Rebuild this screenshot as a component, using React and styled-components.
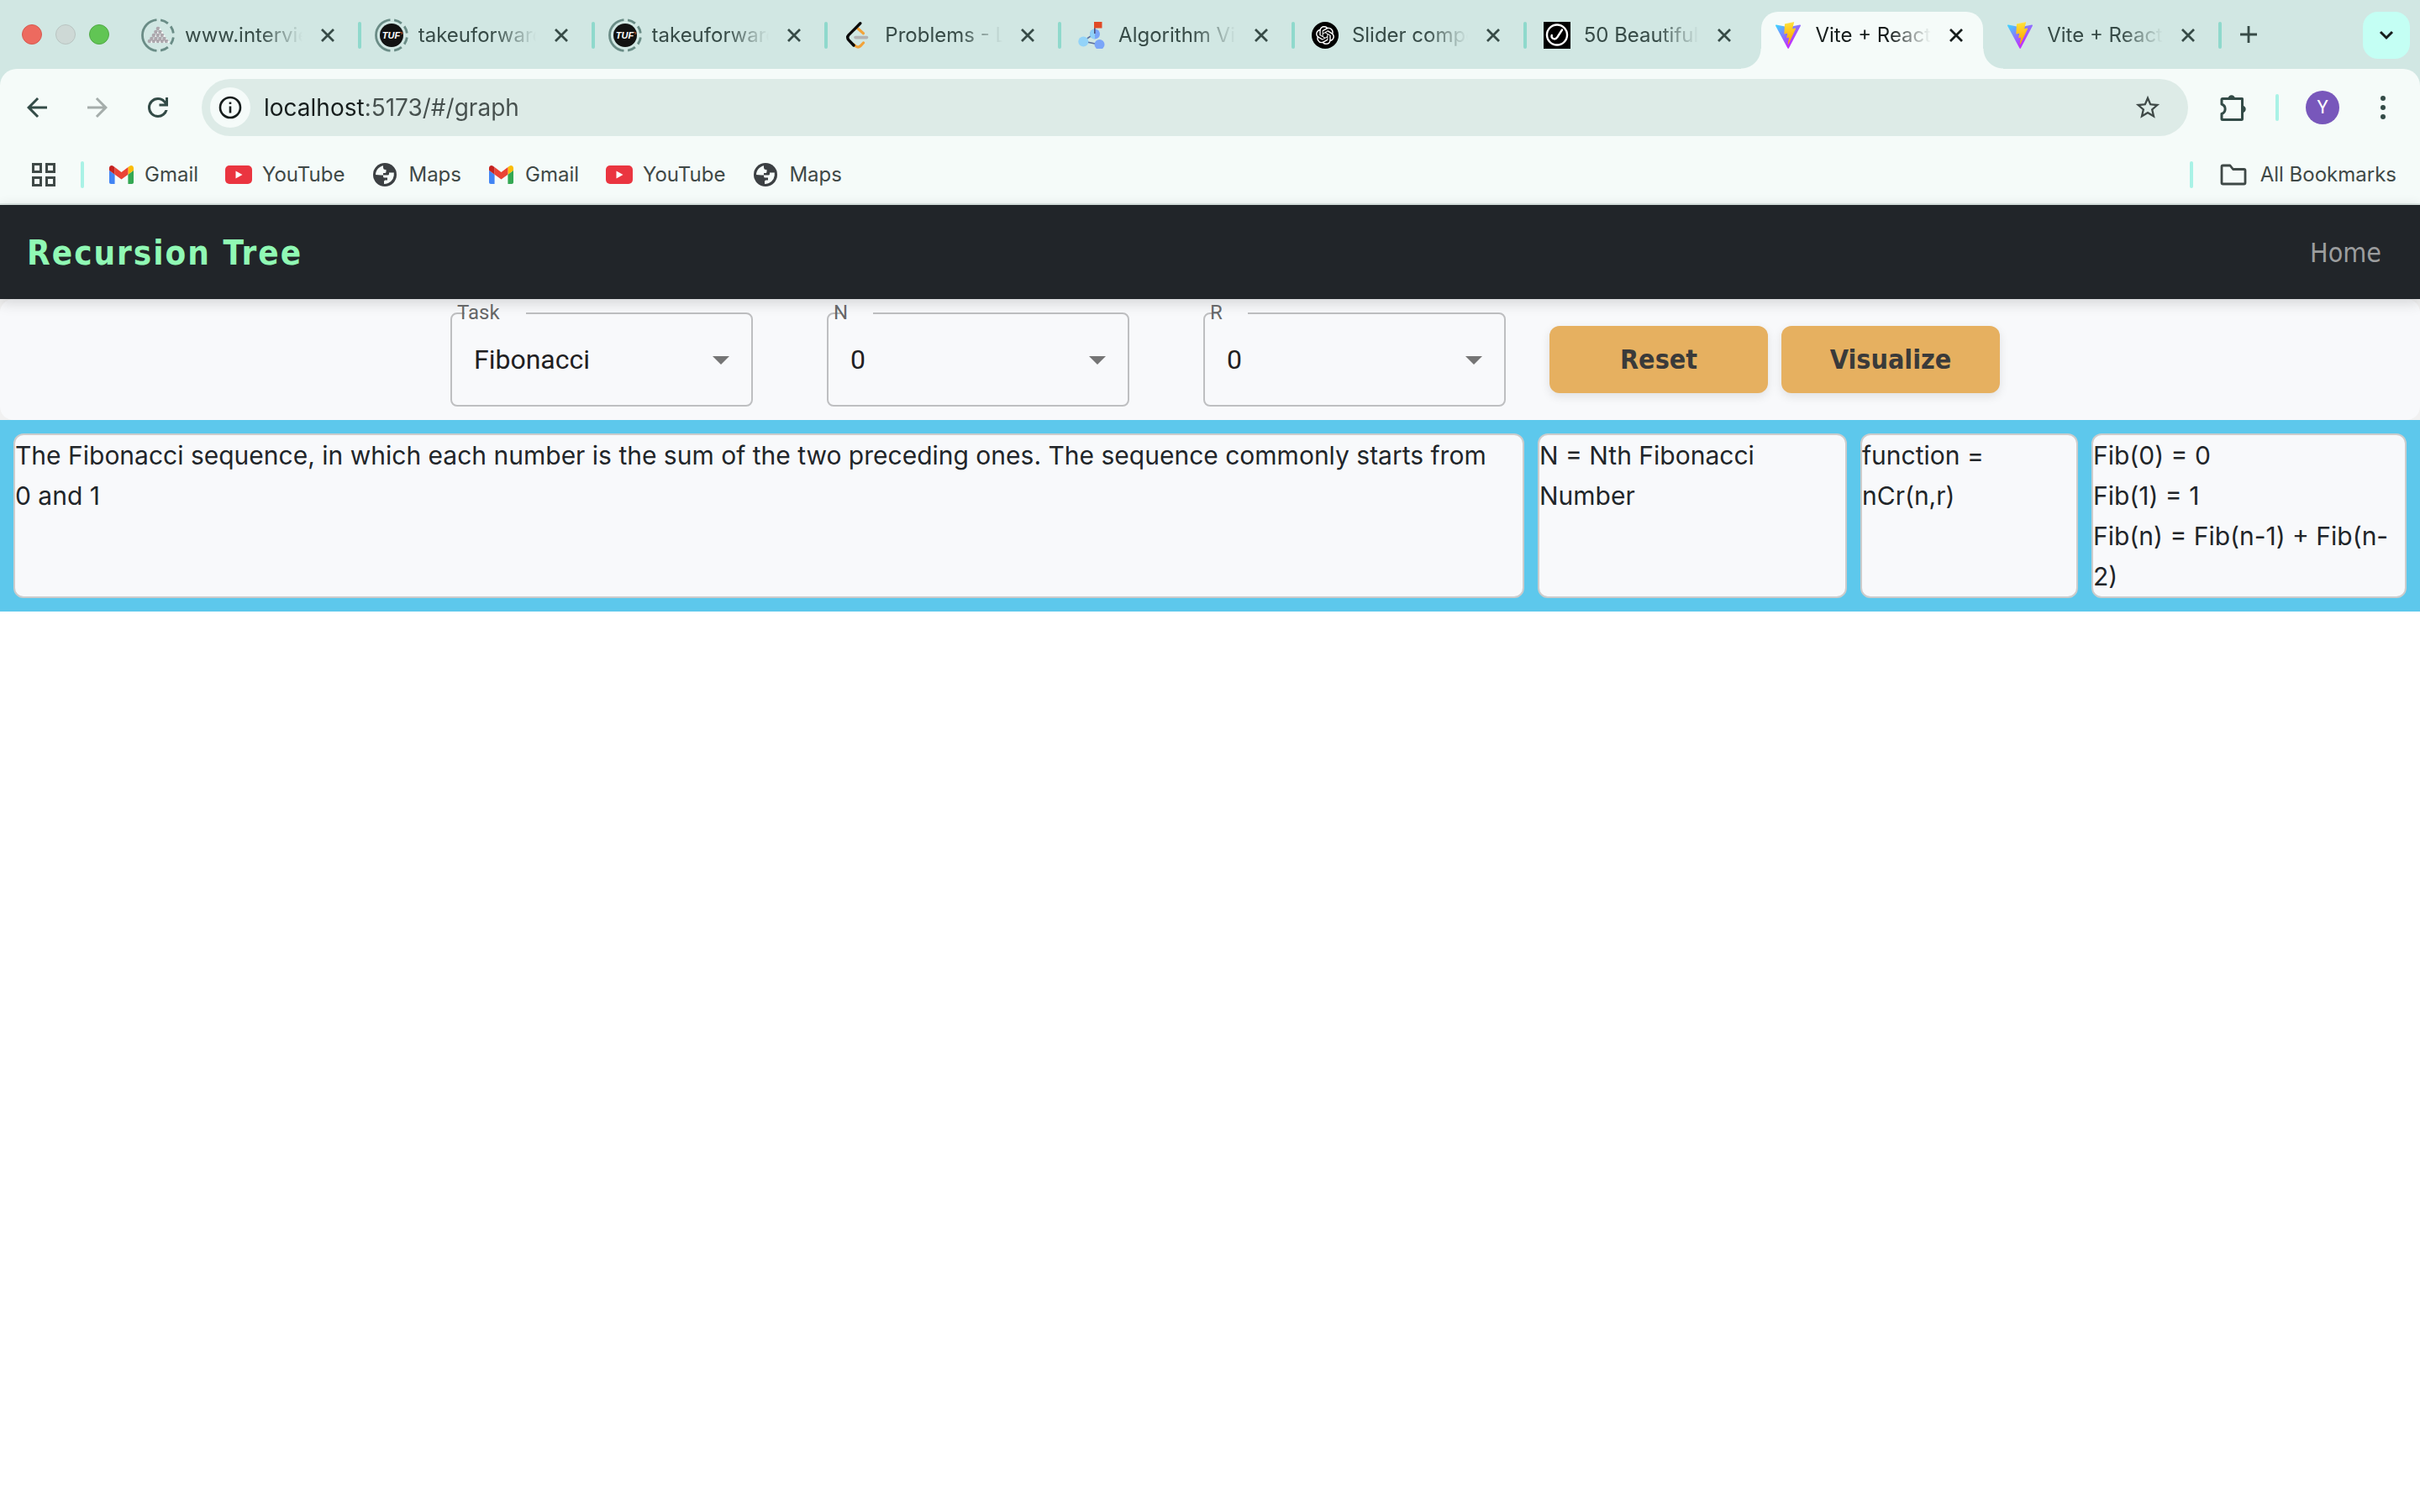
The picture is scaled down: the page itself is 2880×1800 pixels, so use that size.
import React, { useState } from "react";
import styled, { createGlobalStyle, css } from "styled-components";
import { SiOpenai } from "react-icons/si";

const ui = `Inter, "Liberation Sans", sans-serif`;
const heading = `"DejaVu Sans Condensed", "DejaVu Sans", sans-serif`;

const GlobalStyle = createGlobalStyle`
  * { box-sizing: border-box; }
  body { margin: 0; background: #ffffff; color: #212529; font-family: ${ui}; }
  button { border: 0; padding: 0; background: none; font: inherit; color: inherit; cursor: pointer; }
  svg { display: block; flex: none; }
`;

/* ---------- browser window ---------- */

const TabStrip = styled.header`
  display: flex;
  align-items: flex-start;
  height: 82px;
  padding: 14px 12px 0 26px;
  background: #d1e7e3;
`;

const WindowControls = styled.div`
  display: flex;
  align-items: center;
  gap: 16px;
  height: 54px;
  margin-right: 22px;
`;

const Light = styled.button`
  width: 24px;
  height: 24px;
  border-radius: 50%;
  background: ${(p) => p.$fill};
  border: 1px solid ${(p) => p.$edge};
`;

const Tabs = styled.nav`
  display: grid;
  grid-template-columns: repeat(5, 278fr) repeat(4, 276fr);
  flex: 1;
  min-width: 0;
`;

const activeShape = css`
  &::before {
    content: "";
    position: absolute;
    inset: 0 8px 0 4px;
    border-radius: 20px 20px 0 0;
    background: #f5fbf9;
  }
  &::after {
    content: "";
    position: absolute;
    left: -20px;
    right: -16px;
    bottom: 0;
    height: 24px;
    background:
      radial-gradient(circle at 0 0, transparent 23px, #f5fbf9 24px) left / 24px 24px no-repeat,
      radial-gradient(circle at 100% 0, transparent 23px, #f5fbf9 24px) right / 24px 24px no-repeat;
  }
`;

const TabItem = styled.div`
  position: relative;
  display: flex;
  align-items: center;
  min-width: 0;
  height: 68px;
  padding: 0 0 12px 16px;
  color: ${(p) => (p.$active ? "#161d1c" : "#374b47")};
  ${(p) => p.$active && activeShape}
  > * { z-index: 1; }
`;

const Favicon = styled.span`
  display: flex;
  align-items: center;
  justify-content: center;
  width: 40px;
  height: 40px;
  margin-right: 12px;
`;

const TabTitle = styled.span`
  flex: 1;
  min-width: 0;
  overflow: hidden;
  white-space: nowrap;
  font-size: 24px;
  line-height: 32px;
  mask-image: linear-gradient(to right, #000 64%, transparent 100%);
`;

const CloseButton = styled.button`
  display: flex;
  align-items: center;
  justify-content: center;
  width: 32px;
  height: 32px;
  margin: 0 20px 0 14px;
`;

const Divider = styled.span`
  width: 4px;
  height: 32px;
  border-radius: 2px;
  background: ${(p) => p.$color};
`;

const NewTab = styled.button`
  display: flex;
  align-items: center;
  justify-content: center;
  width: 56px;
  height: 54px;
  margin: 0 108px 0 4px;
  color: #374b47;
`;

const TabSearch = styled.button`
  display: flex;
  align-items: center;
  justify-content: center;
  width: 56px;
  height: 56px;
  border-radius: 18px;
  background: #c4fff4;
  color: #161d1c;
`;

const ToolbarBacking = styled.div`
  background: #d1e7e3;
`;

const Toolbar = styled.div`
  display: flex;
  align-items: center;
  padding: 12px 8px;
  border-radius: 20px 20px 0 0;
  background: #f5fbf9;
`;

const ToolButton = styled.button`
  display: flex;
  align-items: center;
  justify-content: center;
  width: 72px;
  height: 68px;
  color: ${(p) => (p.$muted ? "#a5adab" : "#334b47")};
`;

const AddressBar = styled.div`
  display: flex;
  flex: 1;
  align-items: center;
  height: 68px;
  margin: 0 18px 0 16px;
  padding: 0 20px 0 10px;
  border-radius: 34px;
  background: #ddebe7;
`;

const SiteInfo = styled.button`
  display: flex;
  align-items: center;
  justify-content: center;
  width: 48px;
  height: 48px;
  border-radius: 50%;
  background: #f5fbf9;
  color: #161d1c;
`;

/* the host part of the address is darker than the rest */
const AddressInput = styled.input`
  flex: 1;
  min-width: 0;
  height: 48px;
  padding: 0 0 0 16px;
  border: 0;
  outline: 0;
  background: linear-gradient(to right, #161d1c 136px, #46504e 136px);
  background-clip: text;
  -webkit-text-fill-color: transparent;
  color: #3f4947;
  font: 400 28px/48px ${ui};
`;

const StarButton = styled.button`
  display: flex;
  align-items: center;
  justify-content: center;
  width: 56px;
  height: 56px;
  color: #3f4947;
`;

const Avatar = styled.button`
  width: 40px;
  height: 40px;
  margin: 0 16px 0 32px;
  border-radius: 50%;
  background: #7857bb;
  color: #ffffff;
  font: 400 22px/40px Roboto, sans-serif;
`;

const ToolDivider = styled(Divider)`
  margin-left: 14px;
`;

const BookmarkBar = styled.nav`
  display: flex;
  align-items: center;
  gap: 28px;
  height: 70px;
  padding: 0 28px 0 36px;
  border-bottom: 2px solid #dde8e5;
  background: #f5fbf9;
  color: #3f4947;
`;

const BookmarkList = styled.div`
  display: flex;
  flex: 1;
  gap: 32px;
`;

const Bookmark = styled.a`
  display: flex;
  align-items: center;
  gap: ${(p) => (p.$wide ? 16 : 12)}px;
  padding-left: ${(p) => (p.$wide ? 4 : 0)}px;
  color: inherit;
  text-decoration: none;
  white-space: nowrap;
  font-size: 24px;
  line-height: 32px;
`;

const IconSlot = styled.span`
  display: flex;
  align-items: center;
  justify-content: center;
  width: 32px;
  height: 32px;
`;

/* ---------- recursion tree page ---------- */

const Navbar = styled.header`
  position: relative;
  z-index: 1;
  display: flex;
  align-items: center;
  justify-content: space-between;
  height: 112px;
  padding: 2px 46px 0 32px;
  background: #212529;
  box-shadow: 0 4px 16px rgba(0, 0, 0, 0.16);
  font-family: ${heading};
`;

const Brand = styled.a`
  color: #90f9b4;
  font-size: 40px;
  font-weight: 700;
  line-height: 60px;
  letter-spacing: 2px;
  text-decoration: none;
`;

const NavLink = styled.a`
  color: #9b9d9e;
  font-size: 32px;
  line-height: 48px;
  text-decoration: none;
`;

const ControlsBacking = styled.div`
  background: #f1f1f1;
`;

const Controls = styled.form`
  display: flex;
  align-items: center;
  justify-content: center;
  gap: 16px;
  padding: 16px 0 16px 36px;
  border-radius: 16px;
  background: #f8f9fb;
`;

const Fields = styled.div`
  display: flex;
  gap: 88px;
  margin-right: 36px;
`;

const Field = styled.div`
  position: relative;
  width: 360px;
  height: 112px;
`;

const FieldLabel = styled.label`
  position: absolute;
  z-index: 1;
  top: -14px;
  left: 8px;
  color: #666768;
  font: 400 24px/28px Roboto, sans-serif;
`;

const Outline = styled.fieldset`
  position: absolute;
  inset: 0;
  margin: 0;
  padding: 0 0 0 15px;
  border: 2px solid #bebfc1;
  border-radius: 8px;
  pointer-events: none;
`;

const Notch = styled.legend`
  width: ${(p) => p.$width}px;
  height: 2px;
  padding: 0;
`;

const Select = styled.select`
  appearance: none;
  width: 100%;
  height: 112px;
  padding: 0 64px 0 28px;
  border: 0;
  outline: 0;
  background: none;
  color: #1f2022;
  font: 400 32px/46px Roboto, sans-serif;
`;

const Caret = styled.svg`
  position: absolute;
  top: 52px;
  right: 28px;
  pointer-events: none;
`;

const ActionButton = styled.button`
  width: 260px;
  height: 80px;
  border-radius: 12px;
  background: #e6b060;
  color: #3a3a3a;
  box-shadow: 0 4px 12px rgba(0, 0, 0, 0.1);
  font: 700 32px/48px ${heading};
`;

const InfoGrid = styled.section`
  display: grid;
  grid-template-columns: 1798fr 368fr 259fr 375fr;
  gap: 16px;
  padding: 16px;
  background: #5dc8ec;
`;

const InfoCard = styled.div`
  min-width: 0;
  border: 2px solid #cccccc;
  border-radius: 12px;
  background: #f8f9fb;
  font-size: 30px;
  line-height: 48px;
`;

const Line = styled.p`
  margin: 0;
`;

/* ---------- icons ---------- */

const LoadingRing = ({ children }) => (
  <svg width="40" height="40" viewBox="0 0 40 40">
    <circle cx="20" cy="20" r="18.5" fill="none" stroke="#6a8c86" strokeWidth="2.8" pathLength="360"
      strokeDasharray="0 8 27 15 30 15 170 15 30 15 27 8" />
    {children}
  </svg>
);

const pyramid = [[12, 1], [16, 2], [20, 3], [24, 4], [27, 5]];
const PyramidIcon = () => (
  <LoadingRing>
    {pyramid.map(([y, n]) =>
      Array.from({ length: n }, (_, i) => (
        <g key={`${y}-${i}`}>
          <circle cx={20 + (i - (n - 1) / 2) * 5} cy={y} r="2.3" fill="#ada7ad" />
          <circle cx={20 + (i - (n - 1) / 2) * 5 + 2.5} cy={y + 1} r="1.1" fill="#ffffff" />
        </g>
      ))
    )}
  </LoadingRing>
);

const TufIcon = () => (
  <LoadingRing>
    <circle cx="20" cy="20" r="14" fill="#121212" />
    <text x="19.5" y="24" textAnchor="middle" fill="#fff" fontFamily="Liberation Sans, sans-serif" fontSize="11" fontWeight="700" fontStyle="italic">TUF</text>
    <path d="M31 16.5l2 .6-1.4 2" fill="none" stroke="#c2562f" strokeWidth="1" />
  </LoadingRing>
);

const LeetIcon = () => (
  <svg width="32" height="32" viewBox="0 0 32 32" fill="none" strokeLinecap="round" strokeLinejoin="round">
    <path d="M16 8l6.5 5.8" stroke="#f2a33a" strokeWidth="3.2" />
    <path d="M22.5 25l-3.6 3.8q-2.6 2.4-5.4.2L11 27" stroke="#f2a33a" strokeWidth="3.2" />
    <path d="M13 18.6h13.5" stroke="#b3b3b3" strokeWidth="3.6" />
    <path d="M18.8 1.8L5 15.6q-2.6 3 0 6l6 6.4" stroke="#0a0a0a" strokeWidth="3.4" />
  </svg>
);

const AlgoIcon = () => (
  <svg width="32" height="32" viewBox="0 0 32 32">
    <path d="M19.5 14L6 23l19 4" fill="none" stroke="#5b6f9c" strokeWidth="1.6" />
    <circle cx="20" cy="14.5" r="6" fill="#7aa5f8" />
    <path d="M20 8.5a6 6 0 0 0 0 12z" fill="#8fd0f7" />
    <circle cx="6.3" cy="23.5" r="6" fill="#93d3f8" />
    <circle cx="25.5" cy="27" r="6" fill="#7aa5f8" />
    <path d="M19.8 0v14" stroke="#4d4f78" strokeWidth="1.6" />
    <path d="M19 0h9.5v7.5H19z" fill="#e14a26" />
  </svg>
);

const OpenAiIcon = () => (
  <svg width="32" height="32" viewBox="0 0 32 32">
    <circle cx="16" cy="16" r="16" fill="#000" />
    <SiOpenai x="5" y="5" size={22} color="#fff" />
  </svg>
);

const UiverseIcon = () => (
  <svg width="32" height="32" viewBox="0 0 32 32">
    <path d="M0 0h32v32H0z" fill="#000" />
    <circle cx="16" cy="15.5" r="12" fill="none" stroke="#fff" strokeWidth="2.4" />
    <path d="M22 9.5L16.5 18q-2.5 3.6-5.5 1.8-2-1.4-1.3-3.8" fill="none" stroke="#fff" strokeWidth="2.4" strokeLinecap="round" />
  </svg>
);

const ViteIcon = () => (
  <svg width="30" height="32" viewBox="0 0 256 257" preserveAspectRatio="none">
    <defs>
      <linearGradient id="viteBody" x1="-.828%" x2="57.636%" y1="7.652%" y2="78.411%">
        <stop offset="0%" stopColor="#41D1FF" />
        <stop offset="100%" stopColor="#BD34FE" />
      </linearGradient>
      <linearGradient id="viteBolt" x1="43.376%" x2="50.316%" y1="2.242%" y2="89.030%">
        <stop offset="0%" stopColor="#FFEA83" />
        <stop offset="8.333%" stopColor="#FFDD35" />
        <stop offset="100%" stopColor="#FFA800" />
      </linearGradient>
    </defs>
    <path fill="url(#viteBody)" d="M255.153 37.938L134.897 252.976c-2.483 4.44-8.862 4.466-11.382.048L.875 37.958c-2.746-4.814 1.371-10.646 6.827-9.67l120.385 21.517a6.537 6.537 0 0 0 2.322-.004l117.867-21.483c5.438-.991 9.574 4.796 6.877 9.62Z" />
    <path fill="url(#viteBolt)" d="M185.432.063L96.44 17.501a3.268 3.268 0 0 0-2.634 3.014l-5.474 92.456a3.268 3.268 0 0 0 3.997 3.378l24.777-5.718c2.318-.535 4.413 1.507 3.936 3.838l-7.361 36.047c-.495 2.426 1.782 4.5 4.151 3.78l15.304-4.649c2.372-.72 4.652 1.36 4.15 3.788l-11.698 56.621c-.732 3.542 3.979 5.473 5.943 2.437l1.313-2.028l72.516-144.72c1.215-2.423-.88-5.186-3.54-4.672l-25.505 4.922c-2.396.462-4.435-1.77-3.759-4.114l16.646-57.705c.677-2.35-1.37-4.583-3.769-4.113Z" />
  </svg>
);

const CloseIcon = () => (
  <svg width="16" height="16" viewBox="0 0 16 16" fill="none" stroke="currentColor" strokeWidth="2.8">
    <path d="M1 1l14 14M15 1L1 15" />
  </svg>
);

const PlusIcon = () => (
  <svg width="20" height="20" viewBox="0 0 20 20" fill="none" stroke="currentColor" strokeWidth="2.8">
    <path d="M10 0v20M0 10h20" />
  </svg>
);

const ChevronIcon = () => (
  <svg width="18" height="12" viewBox="0 0 18 12" fill="none" stroke="currentColor" strokeWidth="3">
    <path d="M2 2l7 7 7-7" />
  </svg>
);

const BackIcon = () => (
  <svg width="36" height="36" viewBox="0 0 24 24" fill="currentColor">
    <path d="M20 11H7.83l5.59-5.59L12 4l-8 8 8 8 1.41-1.41L7.83 13H20v-2z" />
  </svg>
);

const ForwardIcon = () => (
  <svg width="36" height="36" viewBox="0 0 24 24" fill="currentColor">
    <path d="M4 11h12.17l-5.59-5.59L12 4l8 8-8 8-1.41-1.41L16.17 13H4v-2z" />
  </svg>
);

const ReloadIcon = () => (
  <svg width="36" height="36" viewBox="0 -960 960 960" fill="currentColor">
    <path d="M480-160q-134 0-227-93t-93-227q0-134 93-227t227-93q69 0 132 28.5T720-690v-110h80v280H520v-80h168q-32-56-87.5-88T480-720q-100 0-170 70t-70 170q0 100 70 170t170 70q77 0 139-44t87-116h84q-28 106-114 173t-196 67Z" />
  </svg>
);

const InfoIcon = () => (
  <svg width="28" height="28" viewBox="0 0 28 28" fill="none" stroke="currentColor" strokeWidth="2.6">
    <circle cx="14" cy="14" r="12" />
    <path d="M14 12.5v8M14 7.5v2.6" />
  </svg>
);

const StarIcon = () => (
  <svg width="34" height="34" viewBox="0 0 24 24" fill="currentColor">
    <path d="M22 9.24l-7.19-.62L12 2 9.19 8.63 2 9.24l5.46 4.73L5.82 21 12 17.27 18.18 21l-1.63-7.03L22 9.24zM12 15.4l-3.76 2.27 1-4.28-3.32-2.88 4.38-.38L12 6.1l1.71 4.04 4.38.38-3.32 2.88 1 4.28L12 15.4z" />
  </svg>
);

const PuzzleIcon = () => (
  <svg width="32" height="32" viewBox="0 0 32 32" fill="none" stroke="currentColor" strokeWidth="3" strokeLinejoin="round">
    <path d="M2 12V6.5Q2 5.5 3 5.5H26.5V29.5Q26.5 30.5 25.5 30.5H3Q2 30.5 2 29.5V23.5C7.5 21.5 7.5 14 2 12Z" />
    <path d="M9.5 5.5a4.2 4.2 0 0 1 8.4 0zM26.5 13.8a4.2 4.2 0 0 1 0 8.4z" fill="currentColor" stroke="none" />
  </svg>
);

const DotsIcon = () => (
  <svg width="8" height="30" viewBox="0 0 8 30" fill="currentColor">
    <circle cx="4" cy="4" r="3" />
    <circle cx="4" cy="15" r="3" />
    <circle cx="4" cy="26" r="3" />
  </svg>
);

const GridIcon = () => (
  <svg width="28" height="28" viewBox="0 0 28 28" fill="none" stroke="currentColor" strokeWidth="3">
    <path d="M1.5 1.5h9v9h-9zM17.5 1.5h9v9h-9zM1.5 17.5h9v9h-9zM17.5 17.5h9v9h-9z" />
  </svg>
);

const GmailIcon = () => (
  <svg width="29" height="22" viewBox="52 42 88 66">
    <path fill="#4285f4" d="M58 108h14V74L52 59v43c0 3.32 2.69 6 6 6" />
    <path fill="#34a853" d="M120 108h14c3.32 0 6-2.69 6-6V59l-20 15" />
    <path fill="#fbbc04" d="M120 48v26l20-15v-8c0-7.42-8.47-11.65-14.4-7.2" />
    <path fill="#ea4335" d="M72 74V48l24 18 24-18v26L96 92" />
    <path fill="#c5221f" d="M52 51v8l20 15V48l-5.6-4.2c-5.94-4.45-14.4-.22-14.4 7.2" />
  </svg>
);

const YouTubeIcon = () => (
  <svg width="32" height="22" viewBox="0 0 32 22">
    <rect width="32" height="22" rx="5" fill="#ea3540" />
    <path d="M12.5 6.5l8 4.5-8 4.5z" fill="#fff" />
  </svg>
);

const GlobeIcon = () => (
  <svg width="28" height="28" viewBox="0 0 28 28">
    <circle cx="14" cy="14" r="14" fill="#3c4043" />
    <path fill="#f5fbf9" d="M3 14C3.2 8.5 7 4.4 12 3.2V5.5q0 2.2 2 2.5h1.5v2.5q0 1.5-1.5 1.5h-2v2.5H9z" />
    <path fill="#f5fbf9" d="M12 14.5h5.5q1.5 0 1.5-1.5v-1.5h5.8q1 8.5-6.8 12.5-2.5 1-5 1V22q0-1.5 1.5-1.5H17v-3h-3.5q-1.5 0-1.5-1.5z" />
  </svg>
);

const FolderIcon = () => (
  <svg width="32" height="26" viewBox="0 0 32 26" fill="none" stroke="currentColor" strokeWidth="2.8" strokeLinejoin="round">
    <path d="M2 3.5Q2 2 3.5 2H12l3.5 4.5H28.5Q30 6.5 30 8V22.5Q30 24 28.5 24H3.5Q2 24 2 22.5z" />
  </svg>
);

/* ---------- data ---------- */

const tabs = [
  { title: "www.interviewbit.com", Icon: PyramidIcon },
  { title: "takeuforward.org", Icon: TufIcon },
  { title: "takeuforward.org", Icon: TufIcon },
  { title: "Problems - LeetCode", Icon: LeetIcon },
  { title: "Algorithm Visualizer", Icon: AlgoIcon },
  { title: "Slider component", Icon: OpenAiIcon },
  { title: "50 Beautiful", Icon: UiverseIcon, bare: true },
  { title: "Vite + React", Icon: ViteIcon, active: true, bare: true },
  { title: "Vite + React", Icon: ViteIcon },
];

const bookmarks = [
  { label: "Gmail", Icon: GmailIcon },
  { label: "YouTube", Icon: YouTubeIcon },
  { label: "Maps", Icon: GlobeIcon },
  { label: "Gmail", Icon: GmailIcon },
  { label: "YouTube", Icon: YouTubeIcon },
  { label: "Maps", Icon: GlobeIcon },
];

const fields = [
  { id: "task", label: "Task", options: ["Fibonacci"], notch: 73 },
  { id: "n", label: "N", options: ["0", "1", "2", "3"], notch: 38 },
  { id: "r", label: "R", options: ["0", "1", "2", "3"], notch: 36 },
];

const info = [
  ["The Fibonacci sequence, in which each number is the sum of the two preceding ones. The sequence commonly starts from 0\u00a0and\u00a01"],
  ["N = Nth Fibonacci Number"],
  ["function = nCr(n,r)"],
  ["Fib(0) = 0", "Fib(1) = 1", "Fib(n) = Fib(n-1) + Fib(n-2)"],
];

const SelectField = ({ id, label, options, notch }) => (
  <Field>
    <FieldLabel htmlFor={id}>{label}</FieldLabel>
    <Select id={id} name={id}>
      {options.map((o) => (
        <option key={o}>{o}</option>
      ))}
    </Select>
    <Caret width="20" height="10" viewBox="0 0 20 10" fill="#757575">
      <path d="M0 0h20L10 10z" />
    </Caret>
    <Outline aria-hidden="true">
      <Notch $width={notch} />
    </Outline>
  </Field>
);

export default function App() {
  const [url, setUrl] = useState("localhost:5173/#/graph");
  return (
    <>
      <GlobalStyle />
      <TabStrip>
        <WindowControls>
          <Light aria-label="Close window" $fill="#ed6a5f" $edge="#d65a50" />
          <Light aria-label="Minimize window" $fill="#ced9d6" $edge="#b9c4c1" />
          <Light aria-label="Zoom window" $fill="#61c554" $edge="#50a945" />
        </WindowControls>
        <Tabs aria-label="Tabs">
          {tabs.map(({ title, Icon, active, bare }, i) => (
            <TabItem key={i} $active={active}>
              <Favicon><Icon /></Favicon>
              <TabTitle>{title}</TabTitle>
              <CloseButton aria-label="Close tab"><CloseIcon /></CloseButton>
              <Divider $color={bare ? "transparent" : "#8fd9cc"} />
            </TabItem>
          ))}
        </Tabs>
        <NewTab aria-label="New tab"><PlusIcon /></NewTab>
        <TabSearch aria-label="Search tabs"><ChevronIcon /></TabSearch>
      </TabStrip>

      <ToolbarBacking>
        <Toolbar>
          <ToolButton aria-label="Back"><BackIcon /></ToolButton>
          <ToolButton aria-label="Forward" $muted><ForwardIcon /></ToolButton>
          <ToolButton aria-label="Reload"><ReloadIcon /></ToolButton>
          <AddressBar>
            <SiteInfo aria-label="Site information"><InfoIcon /></SiteInfo>
            <AddressInput aria-label="Address" value={url} onChange={(e) => setUrl(e.target.value)} />
            <StarButton aria-label="Bookmark this tab"><StarIcon /></StarButton>
          </AddressBar>
          <ToolButton aria-label="Extensions"><PuzzleIcon /></ToolButton>
          <ToolDivider $color="#a9f2e6" />
          <Avatar aria-label="Profile">Y</Avatar>
          <ToolButton aria-label="Menu"><DotsIcon /></ToolButton>
        </Toolbar>
      </ToolbarBacking>

      <BookmarkBar aria-label="Bookmarks">
        <IconSlot><GridIcon /></IconSlot>
        <Divider $color="#a9f2e6" />
        <BookmarkList>
          {bookmarks.map(({ label, Icon }, i) => (
            <Bookmark key={i} href="#">
              <IconSlot><Icon /></IconSlot>
              {label}
            </Bookmark>
          ))}
        </BookmarkList>
        <Divider $color="#a9f2e6" />
        <Bookmark href="#" $wide>
          <IconSlot><FolderIcon /></IconSlot>
          All Bookmarks
        </Bookmark>
      </BookmarkBar>

      <Navbar>
        <Brand href="#/">Recursion Tree</Brand>
        <NavLink href="#/">Home</NavLink>
      </Navbar>

      <main>
        <ControlsBacking>
          <Controls onSubmit={(e) => e.preventDefault()}>
            <Fields>
              {fields.map((f) => (
                <SelectField key={f.id} {...f} />
              ))}
            </Fields>
            <ActionButton type="reset">Reset</ActionButton>
            <ActionButton type="submit">Visualize</ActionButton>
          </Controls>
        </ControlsBacking>
        <InfoGrid>
          {info.map((lines, i) => (
            <InfoCard key={i}>
              {lines.map((l) => (
                <Line key={l}>{l}</Line>
              ))}
            </InfoCard>
          ))}
        </InfoGrid>
      </main>
    </>
  );
}
